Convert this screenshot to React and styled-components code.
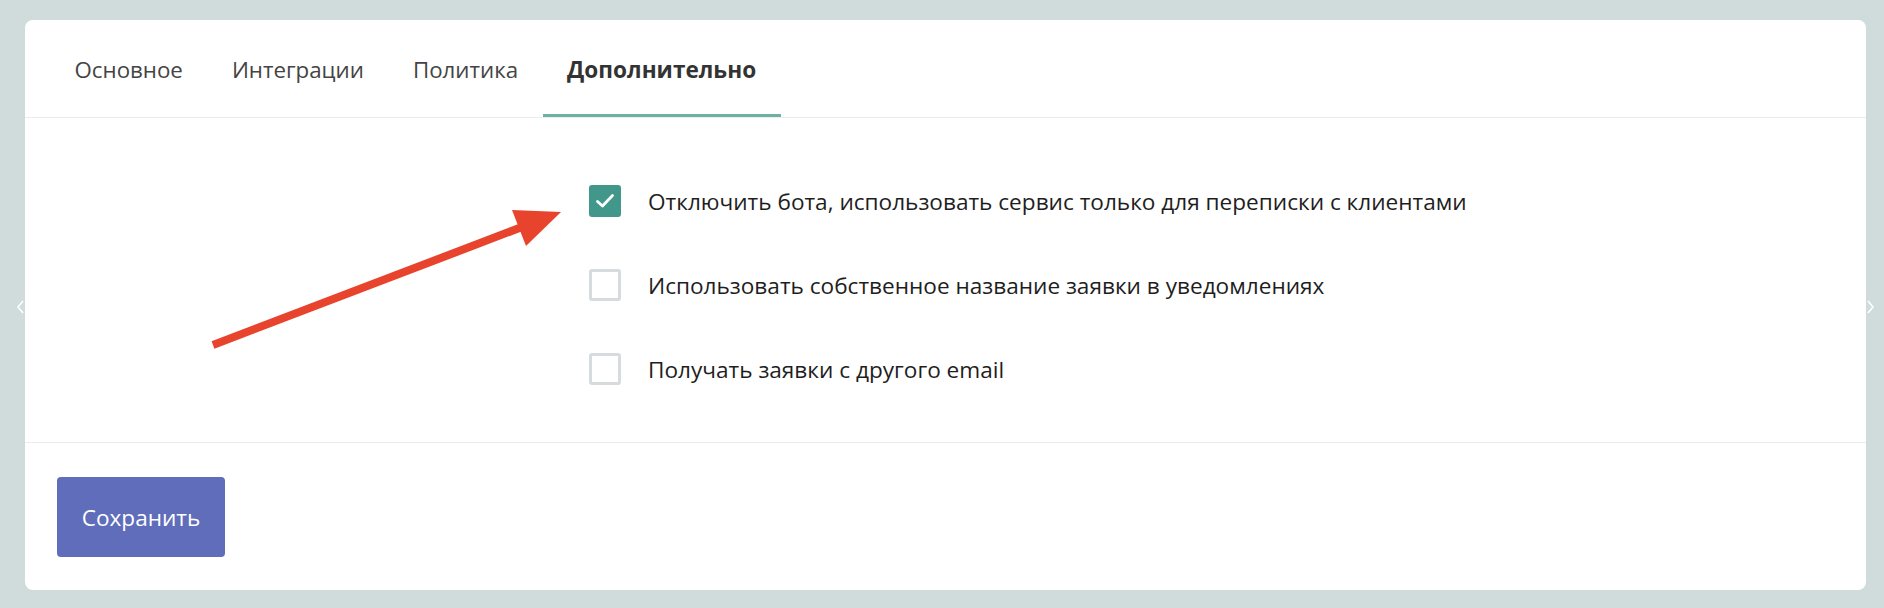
import React, {useState} from "react";
import styled, {createGlobalStyle} from "styled-components";

const GlobalStyle = createGlobalStyle`
  html, body {
    margin: 0;
    padding: 0;
    background: #d0dcdc;
    font-family: "Open Sans", "Noto Sans", sans-serif;
  }
`

const Page = styled.div`
  position: relative;
  padding: 20px 18px 18px 25px;
  height: 608px;
  box-sizing: border-box;
`

const Card = styled.div`
  background: #fff;
  border-radius: 8px;
  height: 570px;
  display: flex;
  flex-direction: column;
  overflow: hidden;
`

const Tabs = styled.div`
  display: flex;
  padding-left: 25px;
  border-bottom: 1px solid #ececec;
`

const Tab = styled.div`
  height: 97px;
  box-sizing: border-box;
  padding: 4px 24.5px 0;
  display: flex;
  align-items: center;
  font-size: ${p => p.active ? "22.6px" : "22.3px"};
  color: ${p => p.active ? "#333" : "#444"};
  font-weight: ${p => p.active ? 700 : 400};
  border-bottom: 3px solid ${p => p.active ? "#6db0a5" : "transparent"};
  cursor: pointer;
`

const Body = styled.div`
  position: relative;
  flex: 1;
  display: flex;
  flex-direction: column;
  gap: 52px;
  padding: 67px 0 0 564px;
  border-bottom: 1px solid #ececec;
`

const Option = styled.label`
  display: flex;
  align-items: center;
  gap: 27px;
  font-size: 22.6px;
  color: #1e1e1e;
  cursor: pointer;
`

const Box = styled.span`
  width: 32px;
  height: 32px;
  box-sizing: border-box;
  border-radius: 3px;
  flex-shrink: 0;
  display: flex;
  align-items: center;
  justify-content: center;
  background: ${p => p.checked ? "#41988a" : "#fff"};
  border: ${p => p.checked ? "none" : "3px solid #d6dbde"};
`

const Footer = styled.div`
  padding: 34px 32px 33px;
`

const SaveButton = styled.button`
  width: 168px;
  height: 80px;
  border: none;
  border-radius: 4px;
  background: #5f6dba;
  color: #fff;
  font-family: "Open Sans", sans-serif;
  font-size: 22.6px;
  cursor: pointer;
`

const Arrow = styled.svg`
  position: absolute;
  left: 0;
  top: 0;
  pointer-events: none;
`

const Chevron = styled.svg`
  position: absolute;
  top: 300px;
  left: ${p => p.x}px;
`

const tabs = ["Основное", "Интеграции", "Политика", "Дополнительно"];

export default function App() {
    const [checks, setChecks] = useState([true, false, false]);
    const labels = [
        "Отключить бота, использовать сервис только для переписки с клиентами",
        "Использовать собственное название заявки в уведомлениях",
        "Получать заявки с другого email"
    ];

    return (
        <Page>
            <GlobalStyle/>
            <Chevron x={17} width="8" height="14" viewBox="0 0 8 14">
                <path d="M6 1 L1 7 L6 13" fill="none" stroke="#fff" strokeWidth="1.6"/>
            </Chevron>
            <Chevron x={1866} width="8" height="14" viewBox="0 0 8 14">
                <path d="M2 1 L7 7 L2 13" fill="none" stroke="#fff" strokeWidth="1.6"/>
            </Chevron>
            <Card>
                <Tabs>
                    {tabs.map((t, i) => (
                        <Tab key={t} active={i === 3}>{t}</Tab>
                    ))}
                </Tabs>
                <Body>
                    {labels.map((l, i) => (
                        <Option key={l} onClick={() => setChecks(checks.map((c, j) => j === i ? !c : c))}>
                            <Box checked={checks[i]}>
                                {checks[i] && (
                                    <svg width="24" height="24" viewBox="0 0 24 24">
                                        <path d="M4.5 12.5 L9.5 17 L19.5 6.5" fill="none" stroke="#fff"
                                              strokeWidth="2.8" strokeLinecap="round" strokeLinejoin="round"/>
                                    </svg>
                                )}
                            </Box>
                            {l}
                        </Option>
                    ))}
                    <Arrow width="560" height="260" viewBox="0 0 560 260">
                        <line x1="188" y1="227" x2="497" y2="109" stroke="#e8432d" strokeWidth="8"/>
                        <polygon points="536,94 487,92 501,128" fill="#e8432d"/>
                    </Arrow>
                </Body>
                <Footer>
                    <SaveButton>Сохранить</SaveButton>
                </Footer>
            </Card>
        </Page>
    );
}
